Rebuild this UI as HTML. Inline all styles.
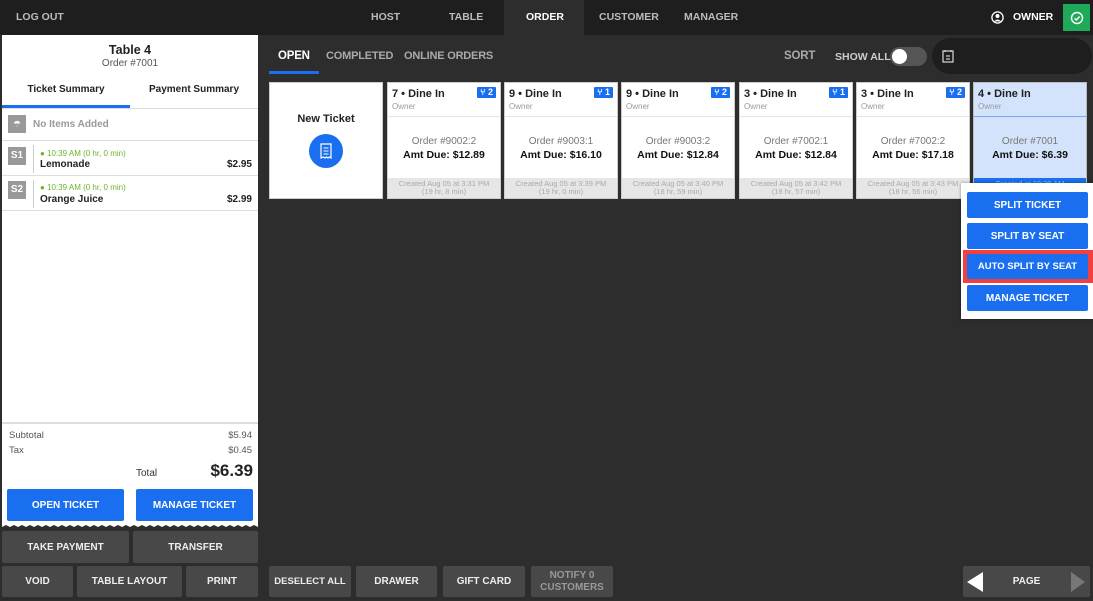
<!DOCTYPE html>
<html><head><meta charset="utf-8"><style>
*{box-sizing:border-box;margin:0;padding:0}
body{width:1093px;height:601px;background:#2d2d2d;font-family:"Liberation Sans",sans-serif;position:relative;overflow:hidden}
.a{position:absolute}
.top{left:0;top:0;width:1093px;height:35px;background:#1e1e1e}
.nav{color:#bbb;font-weight:bold;font-size:10.5px;top:11px}
.card{background:#fff;top:82px;height:117px;width:114px;border:1px solid #ccc}
.card .h{position:absolute;left:4px;top:5px;font-size:11px;font-weight:bold;color:#222}
.card .o{position:absolute;left:4px;top:19px;font-size:8px;color:#999}
.card .ln{position:absolute;left:0;right:0;top:33px;border-top:1px solid #e5e5e5}
.card .b1{position:absolute;left:0;right:0;top:53px;text-align:center;font-size:10px;color:#777}
.card .b2{position:absolute;left:0;right:0;top:66px;text-align:center;font-size:10.5px;font-weight:bold;color:#111}
.card .f{position:absolute;left:0;right:0;bottom:0;height:20px;background:#e6e6e6;color:#aaa;font-size:7.5px;text-align:center;line-height:8px;padding-top:2px}
.badge{position:absolute;right:4px;top:4px;background:#1a6ef0;color:#fff;font-size:9px;font-weight:bold;padding:0 3px;height:11px;line-height:11px;border-radius:1px}
.btn{background:#484848;color:#eee;font-weight:bold;font-size:10px;text-align:center;border-radius:2px;display:flex;align-items:center;justify-content:center}
.blue{background:#1a6ef0;color:#fff;font-weight:bold;font-size:10px;text-align:center;border-radius:2px;display:flex;align-items:center;justify-content:center}
.seat{left:8px;width:18px;height:18px;background:#999;color:#fff;font-size:10px;font-weight:bold;text-align:center;line-height:18px}
.tab{top:50px;font-size:11.5px;font-weight:bold;color:#aaa;letter-spacing:-0.2px}
</style></head><body>
<div class="a top"></div>
<div class="a nav" style="left:16px">LOG OUT</div>
<div class="a nav" style="left:371px">HOST</div>
<div class="a nav" style="left:449px">TABLE</div>
<div class="a" style="left:504px;top:0;width:80px;height:35px;background:#2d2d2d"></div>
<div class="a nav" style="left:526px;color:#fff">ORDER</div>
<div class="a nav" style="left:599px">CUSTOMER</div>
<div class="a nav" style="left:684px">MANAGER</div>
<svg class="a" style="left:991px;top:11px" width="13" height="13" viewBox="0 0 13 13"><circle cx="6.5" cy="6.5" r="5.6" fill="none" stroke="#fff" stroke-width="1.3"/><circle cx="6.5" cy="5" r="2" fill="#fff"/><path d="M3 10.5Q6.5 6.5 10 10.5" fill="#fff"/></svg>
<div class="a nav" style="left:1013px;color:#fff">OWNER</div>
<div class="a" style="left:1063px;top:4px;width:27px;height:27px;background:#1faa5a;display:flex;align-items:center;justify-content:center"><svg width="14" height="14" viewBox="0 0 14 14"><circle cx="7" cy="7" r="5.5" fill="none" stroke="#fff" stroke-width="1.4"/><path d="M4.5 7.2l1.8 1.8 3.3-3.5" fill="none" stroke="#fff" stroke-width="1.4"/></svg></div>

<!-- left panel -->
<div class="a" style="left:2px;top:35px;width:256px;height:490px;background:#fff"></div>
<div class="a" style="left:2px;top:43px;width:256px;text-align:center;font-weight:bold;font-size:12.5px;color:#222">Table 4</div>
<div class="a" style="left:2px;top:58px;width:256px;text-align:center;font-size:10px;color:#555">Order #7001</div>
<div class="a" style="left:2px;top:84px;width:128px;text-align:center;font-weight:bold;font-size:10px;color:#222">Ticket Summary</div>
<div class="a" style="left:130px;top:84px;width:128px;text-align:center;font-weight:bold;font-size:10px;color:#222">Payment Summary</div>
<div class="a" style="left:2px;top:105px;width:128px;height:3px;background:#1a6ef0"></div>
<div class="a" style="left:2px;top:108px;width:256px;border-top:1px solid #ddd"></div>
<div class="a" style="left:8px;top:115px;width:18px;height:18px;background:#999;color:#fff;font-size:9px;text-align:center;line-height:18px">☂</div>
<div class="a" style="left:33px;top:119px;font-size:10px;color:#999;font-weight:bold">No Items Added</div>
<div class="a" style="left:2px;top:140px;width:256px;border-top:1px solid #ddd"></div>
<div class="a seat" style="top:147px">S1</div>
<div class="a" style="left:33px;top:145px;height:28px;border-left:1px solid #ccc"></div>
<div class="a" style="left:40px;top:149px;font-size:8px;color:#6ab42d">● 10:39 AM (0 hr, 0 min)</div>
<div class="a" style="left:40px;top:159px;font-size:10px;font-weight:bold;color:#222">Lemonade</div>
<div class="a" style="left:200px;top:159px;width:52px;text-align:right;font-size:10px;font-weight:bold;color:#222">$2.95</div>
<div class="a" style="left:2px;top:175px;width:256px;border-top:1px solid #ddd"></div>
<div class="a seat" style="top:181px">S2</div>
<div class="a" style="left:33px;top:180px;height:28px;border-left:1px solid #ccc"></div>
<div class="a" style="left:40px;top:183px;font-size:8px;color:#6ab42d">● 10:39 AM (0 hr, 0 min)</div>
<div class="a" style="left:40px;top:194px;font-size:10px;font-weight:bold;color:#222">Orange Juice</div>
<div class="a" style="left:200px;top:194px;width:52px;text-align:right;font-size:10px;font-weight:bold;color:#222">$2.99</div>
<div class="a" style="left:2px;top:210px;width:256px;border-top:1px solid #ddd"></div>
<div class="a" style="left:2px;top:422px;width:256px;border-top:2px solid #ddd"></div>
<div class="a" style="left:9px;top:430px;font-size:9.5px;color:#555">Subtotal</div>
<div class="a" style="left:200px;top:430px;width:52px;text-align:right;font-size:9.5px;color:#555">$5.94</div>
<div class="a" style="left:9px;top:445px;font-size:9.5px;color:#555">Tax</div>
<div class="a" style="left:200px;top:445px;width:52px;text-align:right;font-size:9.5px;color:#555">$0.45</div>
<div class="a" style="left:136px;top:468px;font-size:10px;color:#333">Total</div>
<div class="a" style="left:180px;top:461px;width:73px;text-align:right;font-size:17px;font-weight:bold;color:#222">$6.39</div>
<div class="a blue" style="left:7px;top:489px;width:117px;height:32px">OPEN TICKET</div>
<div class="a blue" style="left:136px;top:489px;width:117px;height:32px">MANAGE TICKET</div>
<svg class="a" style="left:2px;top:524px" width="256" height="5"><path d="M0 0 H256 V3 L252 1 L248 3 L244 1 L240 3 L236 1 L232 3 L228 1 L224 3 L220 1 L216 3 L212 1 L208 3 L204 1 L200 3 L196 1 L192 3 L188 1 L184 3 L180 1 L176 3 L172 1 L168 3 L164 1 L160 3 L156 1 L152 3 L148 1 L144 3 L140 1 L136 3 L132 1 L128 3 L124 1 L120 3 L116 1 L112 3 L108 1 L104 3 L100 1 L96 3 L92 1 L88 3 L84 1 L80 3 L76 1 L72 3 L68 1 L64 3 L60 1 L56 3 L52 1 L48 3 L44 1 L40 3 L36 1 L32 3 L28 1 L24 3 L20 1 L16 3 L12 1 L8 3 L4 1 L0 3Z" fill="#fff"/></svg>

<div class="a btn" style="left:2px;top:531px;width:127px;height:32px">TAKE PAYMENT</div>
<div class="a btn" style="left:133px;top:531px;width:125px;height:32px">TRANSFER</div>
<div class="a btn" style="left:2px;top:566px;width:71px;height:31px">VOID</div>
<div class="a btn" style="left:77px;top:566px;width:105px;height:31px">TABLE LAYOUT</div>
<div class="a btn" style="left:186px;top:566px;width:72px;height:31px">PRINT</div>
<div class="a btn" style="left:269px;top:566px;width:82px;height:31px;font-size:9.5px">DESELECT ALL</div>
<div class="a btn" style="left:356px;top:566px;width:81px;height:31px">DRAWER</div>
<div class="a btn" style="left:443px;top:566px;width:82px;height:31px">GIFT CARD</div>
<div class="a btn" style="left:531px;top:566px;width:82px;height:31px;color:#999;line-height:12px">NOTIFY 0<br>CUSTOMERS</div>
<div class="a btn" style="left:963px;top:566px;width:127px;height:31px">PAGE</div>
<svg class="a" style="left:966px;top:571px" width="120" height="22"><path d="M1 11 L17 1 L17 21Z" fill="#fff"/><path d="M105 1 L119 11 L105 21Z" fill="#777"/></svg>

<!-- order tabs -->
<div class="a tab" style="left:278px;color:#fff">OPEN</div>
<div class="a" style="left:269px;top:71px;width:50px;height:3px;background:#1a6ef0"></div>
<div class="a tab" style="left:326px;font-size:11px">COMPLETED</div>
<div class="a tab" style="left:404px;font-size:11px">ONLINE ORDERS</div>
<div class="a tab" style="left:784px">SORT</div>
<div class="a" style="left:835px;top:51px;font-size:10.5px;font-weight:bold;color:#ccc">SHOW ALL</div>
<div class="a" style="left:890px;top:47px;width:37px;height:19px;border-radius:10px;background:#555"></div>
<div class="a" style="left:892px;top:49px;width:15px;height:15px;border-radius:50%;background:#fff"></div>
<div class="a" style="left:932px;top:38px;width:160px;height:36px;border-radius:18px;background:#1e1e1e"></div>
<svg class="a" style="left:942px;top:49px" width="12" height="14"><rect x="1" y="2" width="10" height="11" fill="none" stroke="#ccc" stroke-width="1.3"/><path d="M3 1v2M9 1v2M4 10h4M4 7h4" stroke="#ccc" stroke-width="1.2"/></svg>

<div class="a" style="left:269px;top:82px;width:114px;height:117px;background:#fff;border:1px solid #ccc"></div>
<div class="a" style="left:269px;top:113px;width:114px;text-align:center;font-size:11px;font-weight:bold;color:#222">New Ticket</div>
<div class="a" style="left:309px;top:134px;width:34px;height:34px;border-radius:50%;background:#1a6ef0"></div>
<svg class="a" style="left:319px;top:143px" width="14" height="16"><path d="M2 1h10v14l-1.5-1-1.5 1-1.5-1-1.5 1-1.5-1L2 15Z" fill="none" stroke="#fff" stroke-width="1.2"/><path d="M4.5 5h5M4.5 8h5M4.5 11h5" stroke="#fff" stroke-width="1"/></svg>

<div class="a card" style="left:387px"><div class="h">7 • Dine In</div><div class="badge">⑂ 2</div><div class="o">Owner</div><div class="ln"></div><div class="b1">Order #9002:2</div><div class="b2">Amt Due: $12.89</div><div class="f">Created Aug 05 at 3:31 PM<br>(19 hr, 8 min)</div></div>
<div class="a card" style="left:504px"><div class="h">9 • Dine In</div><div class="badge">⑂ 1</div><div class="o">Owner</div><div class="ln"></div><div class="b1">Order #9003:1</div><div class="b2">Amt Due: $16.10</div><div class="f">Created Aug 05 at 3:39 PM<br>(19 hr, 0 min)</div></div>
<div class="a card" style="left:621px"><div class="h">9 • Dine In</div><div class="badge">⑂ 2</div><div class="o">Owner</div><div class="ln"></div><div class="b1">Order #9003:2</div><div class="b2">Amt Due: $12.84</div><div class="f">Created Aug 05 at 3:40 PM<br>(18 hr, 59 min)</div></div>
<div class="a card" style="left:739px"><div class="h">3 • Dine In</div><div class="badge">⑂ 1</div><div class="o">Owner</div><div class="ln"></div><div class="b1">Order #7002:1</div><div class="b2">Amt Due: $12.84</div><div class="f">Created Aug 05 at 3:42 PM<br>(18 hr, 57 min)</div></div>
<div class="a card" style="left:856px"><div class="h">3 • Dine In</div><div class="badge">⑂ 2</div><div class="o">Owner</div><div class="ln"></div><div class="b1">Order #7002:2</div><div class="b2">Amt Due: $17.18</div><div class="f">Created Aug 05 at 3:43 PM<br>(18 hr, 56 min)</div></div>
<div class="a card" style="left:973px;background:#d4e3fc;border-color:#bbb"><div class="h">4 • Dine In</div><div class="o">Owner</div><div class="ln" style="border-color:#7aa7ee"></div><div class="b1">Order #7001</div><div class="b2">Amt Due: $6.39</div><div class="f" style="background:#1a6ef0;color:#9bc0fa">Created at 10:39 AM</div></div>

<!-- popup -->
<div class="a" style="left:961px;top:183px;width:132px;height:136px;background:#fff;box-shadow:0 0 3px rgba(0,0,0,.4)"></div>
<div class="a blue" style="left:967px;top:192px;width:121px;height:26px">SPLIT TICKET</div>
<div class="a blue" style="left:967px;top:223px;width:121px;height:26px">SPLIT BY SEAT</div>
<div class="a" style="left:963px;top:250px;width:130px;height:33px;background:#f04040"></div>
<div class="a blue" style="left:967px;top:254px;width:121px;height:25px;font-size:9.5px">AUTO SPLIT BY SEAT</div>
<div class="a blue" style="left:967px;top:285px;width:121px;height:26px">MANAGE TICKET</div>
</body></html>
